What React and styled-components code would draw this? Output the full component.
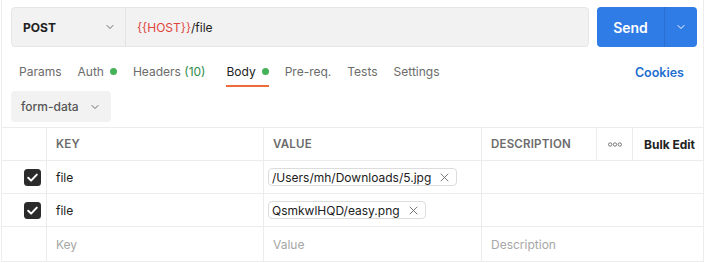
import React from "react";
import styled, { createGlobalStyle } from "styled-components";

const GlobalStyle = createGlobalStyle`
  body {
    margin: 0;
    background: #ffffff;
    font-family: Inter, "Noto Sans", "Liberation Sans", sans-serif;
    color: #212121;
  }
`;

const Pane = styled.div`
  width: 701px;
  height: 262px;
  margin-left: 1px;
  border-left: 1px solid #ededed;
  border-right: 1px solid #ededed;
  display: flex;
  flex-direction: column;
`;

const UrlBar = styled.div`
  display: flex;
  gap: 8px;
  margin: 7px 0 0 9px;
  height: 40px;
`;

const UrlBox = styled.div`
  width: 576px;
  display: flex;
  background: #f2f2f2;
  border: 1px solid #e6e6e6;
  border-radius: 4px;
`;

const Method = styled.div`
  width: 114px;
  box-sizing: border-box;
  display: flex;
  align-items: center;
  justify-content: space-between;
  padding: 0 10px 0 11px;
  border-right: 1px solid #e3e3e3;
  font-size: 12px;
  font-weight: 700;
  color: #212121;
`;

const Url = styled.div`
  display: flex;
  align-items: center;
  padding-left: 11px;
  font-size: 12px;
  color: #212121;
`;

const Var = styled.span`
  color: #e0433b;
`;

const SendButton = styled.div`
  width: 100px;
  display: flex;
  background: #2f7ce6;
  border-radius: 4px;
  color: #ffffff;
`;

const SendLabel = styled.div`
  width: 67px;
  display: flex;
  align-items: center;
  justify-content: center;
  font-size: 14px;
  font-weight: 600;
  border-right: 1px solid #2a6fce;
`;

const SendArrow = styled.div`
  flex: 1;
  display: flex;
  align-items: center;
  justify-content: center;
`;

const Tabs = styled.div`
  display: flex;
  align-items: stretch;
  margin-top: 8px;
  height: 32px;
  padding: 0 19px 0 17px;
  gap: 16px;
`;

const Tab = styled.div`
  display: flex;
  align-items: center;
  gap: 6px;
  margin-right: ${(p) => p.$extra || 0}px;
  font-size: 12px;
  color: ${(p) => (p.$active ? "#212121" : "#6b6b6b")};
  border-bottom: 2px solid ${(p) => (p.$active ? "#ee6b3c" : "transparent")};
  box-sizing: border-box;
  padding-top: 2px;
`;

const Count = styled.span`
  color: #2e8a47;
`;

const Dot = styled.span`
  width: 7px;
  height: 7px;
  border-radius: 50%;
  background: #45b25a;
`;

const Cookies = styled.div`
  margin-left: auto;
  display: flex;
  align-items: center;
  padding-top: 2px;
  font-size: 12.5px;
  font-weight: 600;
  color: #1f6fd0;
`;

const BodyType = styled.div`
  margin: 4px 0 0 9px;
  width: 100px;
  height: 31px;
  box-sizing: border-box;
  display: flex;
  align-items: center;
  gap: 11px;
  padding-left: 10px;
  background: #f2f2f2;
  border-radius: 4px;
  font-size: 12px;
  font-weight: 500;
  color: #555555;
`;

const Table = styled.div`
  margin-top: 5px;
  display: grid;
  grid-template-columns: 45px 217px 218px 115px 36px 70px;
  grid-template-rows: 33px 33px 33px 35px;
  border-top: 1px solid #ececec;
`;

const Cell = styled.div`
  display: flex;
  align-items: center;
  justify-content: ${(p) => (p.$center ? "center" : "flex-start")};
  box-sizing: border-box;
  padding: ${(p) => (p.$center ? "0" : "0 9px")};
  border-right: ${(p) => (p.$last ? "none" : "1px solid #ececec")};
  border-bottom: 1px solid #ececec;
  font-size: 12px;
  color: #212121;
  grid-column: ${(p) => p.$span || "auto"};
`;

const HeadCell = styled(Cell)`
  font-size: 11.5px;
  font-weight: 600;
  color: #6b6b6b;
  letter-spacing: 0.2px;
`;

const BulkEdit = styled(Cell)`
  font-size: 12px;
  font-weight: 700;
  color: #212121;
  padding: 0 0 0 11px;
`;

const CheckCell = styled(Cell)`
  justify-content: flex-end;
  padding: 0 5px 0 0;
`;

const Placeholder = styled.span`
  color: #a6a6a6;
`;

const Chip = styled.div`
  display: flex;
  align-items: center;
  gap: 9px;
  height: 18px;
  box-sizing: border-box;
  padding: 0 7px 0 3px;
  margin-left: -5px;
  border: 1px solid #dcdcdc;
  border-radius: 4px;
  font-size: 12px;
  color: #212121;
`;

const Chevron = ({ color = "#6b6b6b", size = 10 }) => (
  <svg width={size} height={size} viewBox="0 0 10 10" fill="none">
    <path d="M2 3.5 L5 6.5 L8 3.5" stroke={color} strokeWidth="1" strokeLinecap="round" strokeLinejoin="round" />
  </svg>
);

const Close = () => (
  <svg width="9" height="9" viewBox="0 0 9 9" fill="none">
    <path d="M1 1 L8 8 M8 1 L1 8" stroke="#6b6b6b" strokeWidth="0.9" strokeLinecap="round" />
  </svg>
);

const Check = () => (
  <svg width="17" height="17" viewBox="0 0 17 17">
    <rect x="0" y="0" width="17" height="17" rx="3.5" fill="#2b2b2b" />
    <path d="M4.2 8.8 L7.1 11.6 L12.8 5.6" stroke="#ffffff" strokeWidth="2" fill="none" strokeLinecap="round" strokeLinejoin="round" />
  </svg>
);

const Dots = () => (
  <svg width="14" height="5" viewBox="0 0 14 5" fill="none">
    {[2.2, 7, 11.8].map((cx) => (
      <circle key={cx} cx={cx} cy="2.5" r="1.7" stroke="#6b6b6b" strokeWidth="0.9" />
    ))}
  </svg>
);

const rows = [
  { key: "file", value: "/Users/mh/Downloads/5.jpg" },
  { key: "file", value: "QsmkwlHQD/easy.png" },
];

export default function App() {
  return (
    <>
      <GlobalStyle />
      <Pane>
        <UrlBar>
          <UrlBox>
            <Method>
              POST
              <Chevron />
            </Method>
            <Url>
              <Var>{"{{HOST}}"}</Var>/file
            </Url>
          </UrlBox>
          <SendButton>
            <SendLabel>Send</SendLabel>
            <SendArrow>
              <Chevron color="#ffffff" />
            </SendArrow>
          </SendButton>
        </UrlBar>

        <Tabs>
          <Tab>Params</Tab>
          <Tab>
            Auth <Dot />
          </Tab>
          <Tab $extra={5}>
            <span>
              Headers <Count>(10)</Count>
            </span>
          </Tab>
          <Tab $active>
            Body <Dot />
          </Tab>
          <Tab>Pre-req.</Tab>
          <Tab>Tests</Tab>
          <Tab>Settings</Tab>
          <Cookies>Cookies</Cookies>
        </Tabs>

        <BodyType>
          form-data
          <Chevron />
        </BodyType>

        <Table>
          <HeadCell />
          <HeadCell>KEY</HeadCell>
          <HeadCell>VALUE</HeadCell>
          <HeadCell>DESCRIPTION</HeadCell>
          <HeadCell $center>
            <Dots />
          </HeadCell>
          <BulkEdit $last>Bulk Edit</BulkEdit>

          {rows.map((r, i) => (
            <React.Fragment key={i}>
              <CheckCell>
                <Check />
              </CheckCell>
              <Cell>{r.key}</Cell>
              <Cell>
                <Chip>
                  {r.value}
                  <Close />
                </Chip>
              </Cell>
              <Cell $span="span 3" $last />
            </React.Fragment>
          ))}

          <Cell />
          <Cell>
            <Placeholder>Key</Placeholder>
          </Cell>
          <Cell>
            <Placeholder>Value</Placeholder>
          </Cell>
          <Cell $span="span 3" $last>
            <Placeholder>Description</Placeholder>
          </Cell>
        </Table>
      </Pane>
    </>
  );
}
